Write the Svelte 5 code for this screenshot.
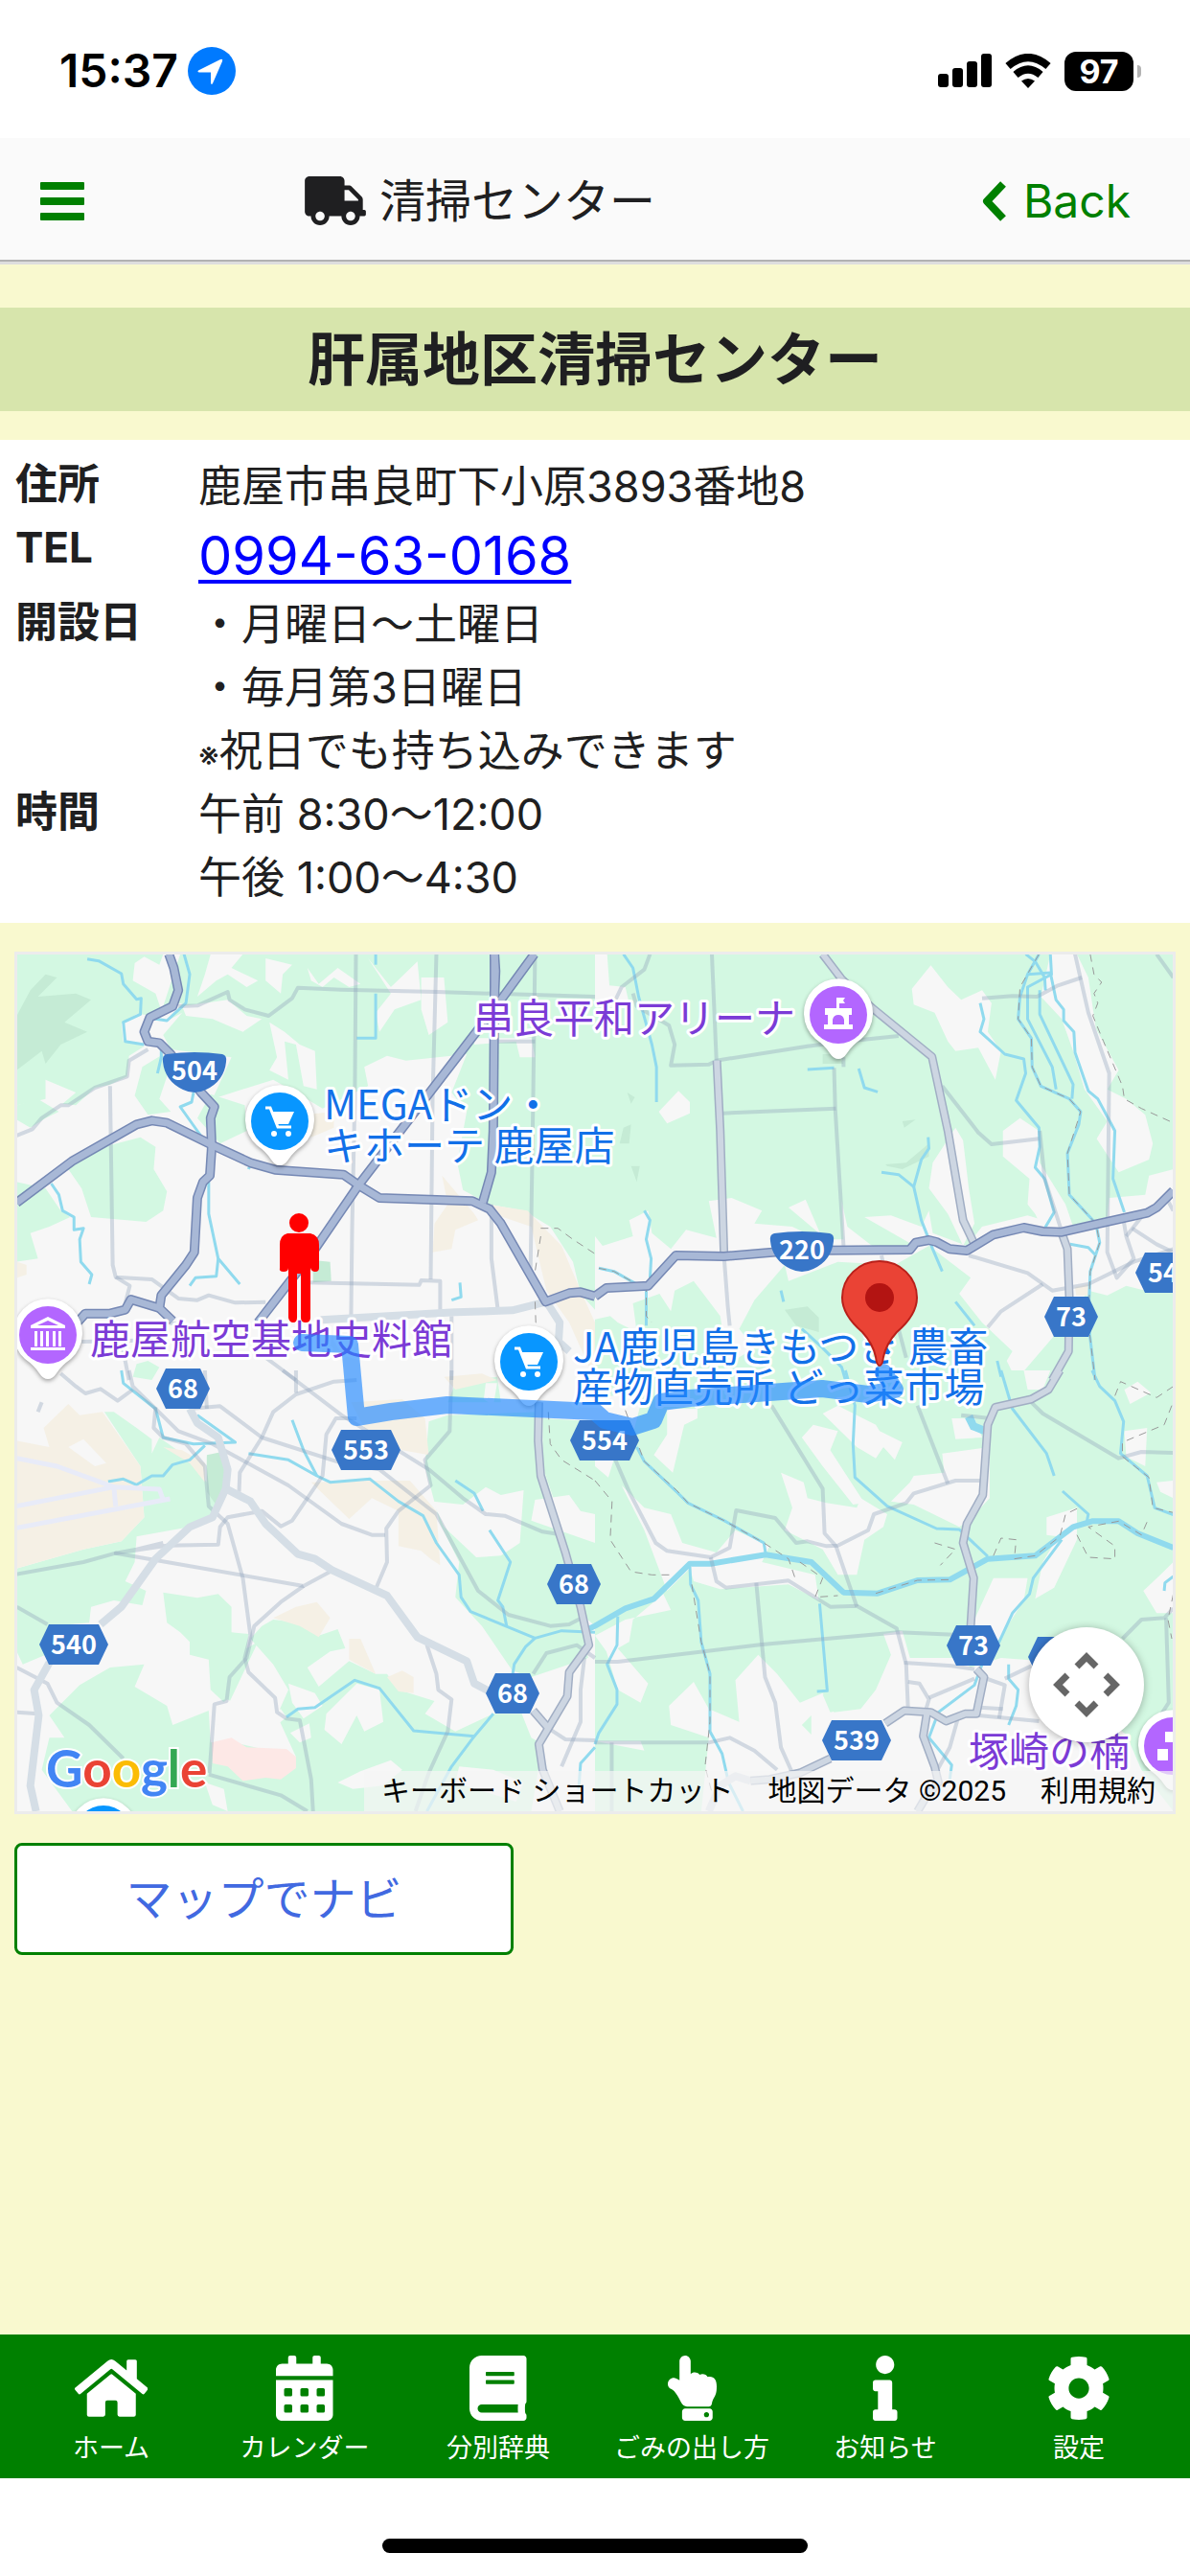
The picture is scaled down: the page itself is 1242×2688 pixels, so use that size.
<script>
  const tabs = [
    { label: 'ホーム', w: 576, d: 'M280.37 148.26L96 300.11V464a16 16 0 0 0 16 16l112.06-.29a16 16 0 0 0 15.92-16V368a16 16 0 0 1 16-16h64a16 16 0 0 1 16 16v95.64a16 16 0 0 0 16 16.05L464 480a16 16 0 0 0 16-16V300L295.67 148.26a12.19 12.19 0 0 0-15.3 0zM571.6 251.47L488 182.56V44.05a12 12 0 0 0-12-12h-56a12 12 0 0 0-12 12v72.61L318.47 43a48 48 0 0 0-61 0L4.34 251.47a12 12 0 0 0-1.6 16.9l25.5 31A12 12 0 0 0 45.15 301l235.22-193.74a12.19 12.19 0 0 1 15.3 0L530.9 301a12 12 0 0 0 16.9-1.6l25.5-31a12 12 0 0 0-1.7-16.93z' },
    { label: 'カレンダー', w: 448, d: 'M0 464c0 26.500 21.500 48 48 48h352c26.500 0 48-21.500 48-48V192H0zM400 64h-48V16c0-8.800-7.200-16-16-16h-32c-8.800 0-16 7.200-16 16v48H160V16c0-8.800-7.200-16-16-16h-32c-8.800 0-16 7.200-16 16v48H48C21.500 64 0 85.500 0 112v48h448v-48c0-26.500-21.500-48-48-48zM76 256h40q12 0 12 12v40q0 12-12 12H76q-12 0-12-12v-40q0-12 12-12zm128 0h40q12 0 12 12v40q0 12-12 12h-40q-12 0-12-12v-40q0-12 12-12zm128 0h40q12 0 12 12v40q0 12-12 12h-40q-12 0-12-12v-40q0-12 12-12zM76 384h40q12 0 12 12v40q0 12-12 12H76q-12 0-12-12v-40q0-12 12-12zm128 0h40q12 0 12 12v40q0 12-12 12h-40q-12 0-12-12v-40q0-12 12-12zm128 0h40q12 0 12 12v40q0 12-12 12h-40q-12 0-12-12v-40q0-12 12-12z' },
    { label: '分別辞典', w: 448, d: 'M448 360V24c0-13.3-10.7-24-24-24H96C43 0 0 43 0 96v320c0 53 43 96 96 96h328c13.3 0 24-10.7 24-24v-16c0-7.5-3.5-14.3-8.9-18.7-4.2-15.4-4.2-59.3 0-74.7 5.4-4.3 8.900-11.1 8.900-18.6zM128 134c0-3.3 2.7-6 6-6h212c3.3 0 6 2.7 6 6v20c0 3.3-2.7 6-6 6H134c-3.3 0-6-2.7-6-6v-20zm0 64c0-3.3 2.7-6 6-6h212c3.3 0 6 2.7 6 6v20c0 3.3-2.7 6-6 6H134c-3.3 0-6-2.7-6-6v-20zm253.4 250H96c-17.7 0-32-14.3-32-32 0-17.6 14.4-32 32-32h285.4c-1.9 17.1-1.9 46.9 0 64z' },
    { label: 'ごみの出し方', w: 384, d: 'M135.652 0c23.625 0 43.826 20.65 43.826 44.8v99.851c17.048-16.34 49.766-18.346 70.944 6.299 22.829-14.288 53.017-2.147 62.315 16.45C361.878 158.426 384 189.346 384 240c0 2.746-.203 13.276-.195 16 .168 61.971-31.065 76.894-38.315 123.731C343.683 391.404 333.599 400 321.786 400H150.261c-18.366-.011-35.889-10.607-43.845-28.464C93.421 342.648 57.377 276.122 29.092 264 10.897 256.203.008 242.616 0 224c-.014-34.222 35.098-57.752 66.908-44.119 8.359 3.583 16.67 8.312 24.918 14.153V44.8c0-23.45 20.543-44.8 43.826-44.8zM136 416h192c13.255 0 24 10.745 24 24v48c0 13.255-10.745 24-24 24H136c-13.255 0-24-10.745-24-24v-48c0-13.255 10.745-24 24-24zm168 28c-11.046 0-20 8.954-20 20s8.954 20 20 20 20-8.954 20-20-8.954-20-20-20z' },
    { label: 'お知らせ', w: 192, d: 'M20 424.229h20V279.771H20c-11.046 0-20-8.954-20-20V212c0-11.046 8.954-20 20-20h112c11.046 0 20 8.954 20 20v212.229h20c11.046 0 20 8.954 20 20V492c0 11.046-8.954 20-20 20H20c-11.046 0-20-8.954-20-20v-47.771c0-11.046 8.954-20 20-20zM96 0C56.235 0 24 32.235 24 72s32.235 72 72 72 72-32.235 72-72S135.764 0 96 0z' },
    { label: '設定', w: 512, d: 'M487.4 315.7l-42.6-24.6c4.3-23.2 4.3-47 0-70.2l42.6-24.6c4.9-2.8 7.1-8.6 5.500-14-11.1-35.6-30-67.8-54.7-94.6-3.8-4.1-10-5.1-14.8-2.3L380.8 110c-17.9-15.4-38.5-27.3-60.8-35.1V25.8c0-5.600-3.900-10.500-9.400-11.700-36.700-8.200-74.300-7.800-109.200 0-5.500 1.200-9.400 6.100-9.400 11.700V75c-22.200 7.900-42.800 19.800-60.800 35.100L88.700 85.500c-4.900-2.800-11-1.900-14.800 2.300-24.700 26.700-43.600 58.900-54.700 94.600-1.700 5.400.6 11.200 5.500 14L67.300 221c-4.300 23.200-4.300 47 0 70.200l-42.600 24.600c-4.900 2.800-7.100 8.600-5.500 14 11.100 35.600 30 67.800 54.700 94.600 3.800 4.100 10 5.100 14.800 2.300l42.600-24.600c17.900 15.400 38.500 27.300 60.800 35.100v49.200c0 5.600 3.900 10.500 9.400 11.700 36.700 8.200 74.300 7.800 109.200 0 5.500-1.200 9.400-6.100 9.400-11.700v-49.200c22.200-7.900 42.800-19.800 60.800-35.100l42.600 24.600c4.900 2.800 11 1.900 14.800-2.300 24.700-26.700 43.600-58.900 54.700-94.600 1.500-5.500-.7-11.300-5.600-14.100zM256 336c-44.1 0-80-35.9-80-80s35.9-80 80-80 80 35.900 80 80-35.900 80-80 80z' }
  ];

  // Four survey sheets, each with its own local grid, placed by translate + scale.
  const sheets = [
    {
      at: 'translate(0 980) scale(.39605 .33333)',
      land: [
        ['green', '44,47 430,47 420,80 380,55 355,75 350,130 410,170 430,240 360,235 320,265 325,320 380,335 340,365 335,430 290,455 250,465 200,520 165,515 200,480 120,440 120,500 44,520'],
        ['green', '44,520 100,500 155,540 120,560 80,590 44,565'],
        ['green', '375,400 430,360 440,430 420,500 450,540 390,550 355,490'],
        ['green', '475,47 1568,47 1568,1160 1530,1110 1510,1010 1450,900 1380,850 1290,830 1220,785 1205,700 1230,540 1190,480 1230,360 1070,380 1020,365 960,400 970,460 850,530 780,480 720,440 560,500 610,370 450,345 430,300 480,230 450,250 480,200 430,210'],
        ['green', '555,485 645,520 650,600 580,640 520,560'],
        ['green', '210,670 370,620 410,650 405,720 440,790 430,850 385,885 240,870 215,780 180,720'],
        ['green', '44,760 120,780 160,850 185,870 130,900 80,920 90,960 100,1000 44,1010'],
        ['green', '360,1330 390,1320 420,1340 400,1380 350,1370'],
        ['moss', '44,240 80,160 120,110 150,120 100,180 200,170 240,190 170,260 230,290 160,330 120,390 110,350 44,410'],
        ['moss', '825,1005 870,1010 873,1070 825,1075'],
        ['land', '555,47 640,47 610,90 680,130 650,150 600,110 570,130 520,180 540,110'],
        ['land', '700,60 770,80 745,110 740,170 700,130'],
        ['land', '810,90 840,140 890,90 950,140 920,150 880,120 850,150 820,130'],
        ['land', '970,60 1030,150 1100,70 1110,190 1040,220 1000,290 990,230 1030,170'],
        ['land', '480,210 600,190 650,240 690,250 640,290 560,250 490,240'],
        ['land', '710,260 750,290 790,330 830,350 835,470 800,460 780,330 750,320 760,440 710,410 730,370'],
        ['land', '1110,120 1170,120 1180,260 1130,300 1110,220'],
        ['land', '1250,310 1400,310 1410,370 1370,370 1360,320 1250,330'],
        ['sand', '800,550 880,540 880,590 820,620'],
        ['sand', '1165,740 1250,860 1260,880 1200,910 1190,970 1140,980 1145,890 1180,830'],
        ['sand', '1280,830 1390,850 1480,960 1530,1100 1568,1200 1568,1380 1500,1200 1440,1100 1400,900 1300,860'],
        ['sand', '44,1010 70,1020 70,1050 44,1060']
      ],
      water: ['230,62 260,68 320,108 325,140 360,188 372,185 370,235 325,260 330,320 380,330', '485,47 500,110 490,200 440,255 385,245', '425,330 425,370 415,420', '510,480 505,510 475,525 520,600 545,640', '990,170 990,310 940,310', '135,765 155,800 165,850 195,870 195,910 220,905 210,940 213,1010 242,1050 235,1080', '550,760 550,860 575,1000 632,1080', '575,1000 570,1055 515,1060 500,1085', '1190,1130 1215,1120 1212,1075', '990,47 990,80', '655,720 665,690'],
      minor: ['44,615 85,595 110,560 160,520 180,520 250,465 335,430 340,380 390,345', '290,460 297,1020 305,1058 400,1065 470,1125 520,1130 550,1115 620,1138 700,1136', '305,1058 342,1085 330,1140', '470,210 520,208 600,165 605,190 645,220 708,240 770,185 785,152 900,158 1150,165 1568,180', '938,47 935,500 928,900 925,1200', '1150,47 1140,500 1135,1065', '1410,47 1405,500 1398,1040', '810,1075 1105,1082 1110,1068 1160,1070 1160,1165', '1295,830 1295,1000 1312,1160', '1310,320 1410,320', '700,1310 780,1380', '215,1260 420,1255', '1190,1180 1190,1380', '320,1260 340,1380', '430,1160 440,1200 490,1210'],
      wide: ['845,1192 1200,1168 1350,1162 1440,1135 1475,1200 1472,1260 1500,1290'],
      trunk: ['445,47 458,90 470,160 455,210 395,245 380,290 390,320 420,325 450,360 530,480 565,525 555,560 558,650 553,740 535,760 520,810 512,980 490,1020 425,1115 420,1155 455,1195', '44,825 190,695 360,580 400,568 440,575 560,645 660,700 725,722 905,737 945,770 1000,810 1245,820 1290,845 1320,890 1438,1135 1500,1108 1530,1105 1568,1118', '1408,47 1320,190 945,770 830,970 680,1200', '1303,47 1306,100 1303,180 1300,600 1295,730 1272,825', '200,1205 225,1172 290,1172 330,1160 345,1128 420,1155', '1303,47 1303,180'],
      second: [],
      dash: ['1425,905 1470,905 1510,940 1568,985', '1425,930 1410,1040', '1410,1135 1412,1200 1440,1260']
    },
    {
      at: 'translate(621 980) scale(.39605 .33333)',
      land: [
        ['green', '0,47 1524,47 1524,1380 0,1380'],
        ['land', '0,47 32,47 38,145 80,150 90,200 60,220 0,200'],
        ['land', '835,155 885,82 930,150 965,190 1020,160 1045,200 1035,290 1070,350 1055,440 1010,340 950,350 930,320 895,230 840,205'],
        ['land', '168,540 220,475 250,510 250,545 190,577'],
        ['land', '1075,600 1120,560 1170,600 1172,700 1240,830 1260,900 1180,910 1160,860 1140,830 1145,750 1075,680'],
        ['land', '950,590 970,630 985,780 1000,890 970,960 930,860 880,780 890,700'],
        ['land', '1200,47 1270,47 1300,120 1320,280 1380,410 1350,470 1400,500 1450,550 1470,640 1460,690 1380,730 1322,625 1350,570 1290,470 1260,350 1230,250 1175,180'],
        ['land', '1524,720 1524,1080 1450,1100 1400,1085 1350,1115 1300,1100 1240,1200 1110,1380 1085,1320 1100,1290 1020,1200 960,1110 990,1060 880,960 790,1020 640,1010 510,1070 500,1020 420,1130 380,1220 420,1280 350,1330 330,1180 260,1070 210,1100 200,1165 170,1110 100,1140 110,1230 60,1200 40,1180 0,1190 0,930 20,960 100,930 90,880 140,850 150,920 200,970 240,910 320,935 300,820 360,810 440,850 420,890 520,900 640,970 510,840 555,815 600,940 655,940 650,820 665,900 730,960 850,965 710,870 780,865 860,900 880,850 890,920 980,960 1020,900 1140,865 1240,900 1350,870 1355,810 1450,800 1460,740'],
        ['sand', '1265,1090 1300,1080 1300,1115 1268,1115'],
        ['moss', '765,705 820,700 880,640 880,680 810,720 770,710'],
        ['moss', '500,1160 560,1150 590,1185 590,1230 530,1210'],
        ['moss', '85,480 105,495 95,515'], ['moss', '75,590 95,580 90,640 65,640'], ['moss', '600,360 640,360 655,390 600,390'],
        ['moss', '95,710 118,710 110,760'], ['moss', '810,570 845,565 815,590']
      ],
      water: ['75,47 100,90 115,180 150,330 162,400 162,510', '130,850 145,880 135,940 148,1000 145,1060', '560,408 630,403', '695,405 710,465 745,478', '755,730 800,737 840,775 860,690 880,655 878,620', '840,775 860,880 890,970 915,1040', '1015,200 1025,250 1015,290 1080,360 1130,375 1135,420 1110,505 1170,590 1172,650 1160,715 1185,750 1210,855 1185,905', '1170,47 1140,110 1120,180 1115,250 1150,310 1152,400 1175,460 1250,500 1280,540 1275,580 1245,670 1250,800 1320,890 1330,950 1305,1040 1300,1200 1318,1380', '1200,47 1203,110 1140,150 1140,250 1205,400 1215,470', '1140,110 1200,105 1215,190 1235,220 1235,255 1262,290 1265,355 1300,475 1325,500 1370,600 1365,750 1395,855', '1172,160 1172,235 1260,455 1257,500', '490,1100 497,1135', '950,1135 1000,1210', '545,1220 600,1280 650,1340 660,1380', '1252,955 1300,965 1320,990', '1135,47 1160,70 1185,120 1187,160', '10,1030 50,1040 110,1080', '135,1100 135,1210', '1060,1320 1070,1370'],
      minor: ['145,47 130,95 70,150 50,200', '100,170 110,210 195,270 210,330 200,395 300,392 320,380 560,335 660,320 800,303', '308,47 320,380', '335,545 635,530', '630,403 633,530 655,960', '655,400 655,370', '340,993 350,1150 355,1210', '915,460 1010,605 1045,642 1170,625', '1172,600 1185,750 1230,915', '1020,185 1100,178 1165,180 1220,145 1283,120', '1265,47 1300,230 1355,420 1350,980 1375,1060 1420,1000 1400,930 1390,860', '985,990 1140,1045 1205,1100 1300,1080 1420,1010 1524,970', '1180,1080 1070,1165 1035,1215', '1415,905 1480,955 1524,980', '1524,120 1480,47', '1510,820 1524,850', '800,1220 820,1310', '755,990 760,1020', '1440,870 1400,930'],
      wide: [],
      trunk: ['0,1118 30,1092 140,1085 213,990 340,993 520,975 830,972 845,950 880,942 900,948 935,970 980,975 1050,925 1130,903 1180,915 1230,917 1330,890 1455,857 1480,840 1524,788'],
      second: ['600,47 650,125 730,215 888,368 930,600 970,880 1000,955', '321,380 330,600 340,985', '1230,920 1245,970 1250,1120 1248,1290 1205,1380'],
      dash: ['1305,47 1315,110 1335,135 1315,170 1325,200 1312,240 1340,320 1390,460 1395,500 1440,530 1524,575', '1170,47 1120,150 1115,250 1150,310 1152,400 1175,460 1250,500 1280,540 1245,670 1250,800 1320,890 1330,950 1305,1040 1300,1200 1318,1380', '135,1080 135,1180 150,1200', '10,1030 50,1040 110,1080']
    },
    {
      at: 'translate(0 1430) scale(.39605 .33333)',
      land: [
        ['green', '44,620 220,560 320,535 380,460 370,300 275,130 300,130 360,180 400,215 400,260 420,210 480,260 520,310 545,350 545,270 580,260 600,370 570,460 500,490 360,520 355,600 330,660 385,690 375,735 300,720 240,740 235,790 130,800 120,890 60,920 44,880'],
        ['moss', '545,265 585,255 598,370 575,430 545,380'],
        ['green', '430,695 520,712 575,700 610,740 610,820 655,825 650,870 680,850 600,1050 555,1000 550,905 500,890 500,850 475,820 440,790'],
        ['green', '130,1080 210,985 290,930 380,920 355,990 440,1050 455,1110 550,1065 555,1165 600,1160 780,1210 730,1080 760,1000 720,920 660,840 690,800 720,780 790,790 840,830 890,810 910,870 870,880 810,930 840,990 920,910 990,950 1020,950 1050,1000 1145,1035 1120,1075 1200,1130 1300,1075 1375,1075 1400,1150 1430,1170 1400,1380 190,1380 110,1250 130,1150 170,1150'],
        ['green', '1130,160 1180,140 1420,130 1430,300 1500,560 1520,740 1550,900 1400,960 1350,940 1270,800 1200,710 1210,600 1160,480 1120,300'],
        ['green', '1200,40 1310,20 1320,100 1180,100'],
        ['green', '1430,150 1568,160 1568,800 1530,760 1520,700 1470,440 1430,300'],
        ['land', '1140,410 1220,420 1280,365 1320,390 1380,375 1370,540 1320,580 1255,585 1170,490'],
        ['land', '1410,405 1500,390 1530,440 1568,450 1568,540 1400,470'],
        ['land', '1280,40 1310,40 1300,110 1275,90'],
        ['land', '760,980 830,1010 850,1050 800,1090 770,1040'], ['land', '690,1085 740,1060 755,1085 715,1125'], ['land', '765,1135 815,1105 820,1150 790,1165'],
        ['land', '860,1075 940,980 1000,1000 1010,1100 960,1130 940,1080 900,1170 855,1125'],
        ['land', '560,1060 600,1030 655,1070 620,1100 560,1110'], ['land', '540,1290 590,1310 600,1380 560,1360'], ['land', '890,1290 950,1255 1030,1220 1060,1250 1010,1300 930,1310'],
        ['land', '1210,1240 1300,1250 1380,1290 1360,1350 1200,1290'],
        ['sand', '44,220 130,240 115,180 180,105 210,140 270,130 370,300 380,460 320,535 220,560 44,620'],
        ['sand', '925,100 1060,90 1120,150 1130,265 1060,250 960,180'], ['sand', '430,240 480,250 540,290 540,350 500,290'],
        ['sand', '820,350 980,345 1080,345 1150,440 1160,610 1135,590 1110,565 1050,550 1050,440 980,400 920,465'],
        ['sand', '720,775 780,740 835,725 870,775 840,835 790,800'], ['sand', '920,840 950,840 990,950 920,905'], ['sand', '1020,960 1060,940 1090,960 1090,1010 1050,1005'],
        ['sand', '1170,20 1270,10 1310,30 1200,60'],
        ['land', '180,240 220,215 280,290 250,300'],
        ['pink', '558,1165 610,1150 650,1180 755,1185 780,1210 780,1245 740,1280 700,1275 640,1285 600,1240 560,1230']
      ],
      water: ['320,0 325,40 410,120 430,210 510,230 620,225 520,140', '285,348 325,340 360,358 400,330 430,330 455,295 500,280 540,235', '770,155 800,250 835,330', '655,260 760,280 835,330 870,350 975,340 1050,410 1115,455 1150,540 1210,640 1215,710 1240,755 1410,838 1480,815 1568,820', '1200,345 1250,385 1273,440', '1290,500 1345,600 1312,720 1325,740 1335,800', '755,1085 785,1060 830,1055 935,970 1000,995 1090,1128 1250,1145 1300,1075', '1410,838 1385,865 1355,920 1350,960', '1250,1145 1190,1240 1125,1380', '1568,1180 1530,1230 1525,1310'],
      minor: ['160,10 200,50 225,72 265,58 310,95 350,60', '340,0 350,50 470,190 560,230 760,360 900,480 980,515 1015,515', '745,0 900,140 1130,310 1220,400 1280,450 1330,455 1430,505 1470,512', '940,30 880,35 780,75 720,130 690,210 632,320 630,380', '500,120 580,112 690,210 900,290 1000,310 1150,450 1260,690 1340,765 1450,800 1500,795 1540,770', '540,0 545,120', '940,150 885,150 860,200 850,330 770,470 740,488 690,440 600,460 580,490 575,545 440,548 305,572 360,560 430,540', '44,638 220,600 305,572 800,675 870,630', '800,675 740,725 670,800 650,900 605,960 597,1035 565,1045 552,1260', '410,115 405,180 430,210 490,230 540,300 550,425 600,480 640,650 660,830 645,900 655,945 725,1025 730,1070 755,1090 790,1095 820,1280 825,1380', '1190,0 1185,190 1120,280 1135,360 1050,440 1018,495 1020,600 990,685', '44,740 125,795', '44,930 125,980 150,1040 235,1110 325,1215', '44,1070 100,1075', '550,1265 740,1330 810,1380', '1125,860 1150,950 1155,1000 1190,1030 1180,1130 1130,1260 1095,1380', '1405,950 1440,885 1520,860 1568,900', '1540,900 1530,1000 1530,1100 1480,1240', '1445,1120 1490,1155 1568,1158', '780,0 780,70', '100,130 110,100'],
      wide: ['500,120 520,165 575,210 600,310 595,370 560,460 500,490 410,590 320,740 265,795', '130,915 90,1000 102,1080 80,1300 95,1380', '595,370 660,410 700,480 785,575 830,590 875,625 1020,705 1100,835 1230,910 1250,980 1290,1005'],
      runway: ['44,425 300,365 420,372 430,405', '44,493 448,402', '44,275 150,300 300,365 305,425'],
      trunk: [],
      second: ['1420,100 1418,220 1425,330 1490,570 1530,740 1552,860 1500,945 1495,1020 1445,1120 1420,1170 1430,1250 1475,1380', '1405,1065 1445,1120'],
      dash: ['1445,130 1450,230 1480,280 1568,345']
    },
    {
      at: 'translate(621 1430) scale(.39605 .33333)',
      land: [
        ['green', '0,0 1524,0 1524,1380 0,1380'],
        ['land', '0,90 130,60 100,200 60,240 35,335 0,300'],
        ['land', '190,120 270,120 270,150 235,170 205,320 155,265 190,200'],
        ['land', '545,210 575,170 640,190 620,250 710,415 680,420 600,300'], ['land', '600,135 640,110 740,170 750,190 810,225 790,280 760,240 740,275 690,240'],
        ['land', '490,320 550,350 560,400 610,415 690,430 700,400 770,450 760,490 710,530 690,640 640,640 600,560 500,500 520,430'],
        ['land', '830,350 840,330 920,320 915,260 1040,240 1040,400 985,470 960,490 840,420 780,410'],
        ['land', '940,150 1000,150 1020,210 950,215'],
        ['land', '70,360 130,430 200,450 230,540 320,570 370,500 460,550 440,600 580,640 590,720 510,670 330,685 260,660 250,620 190,690 130,500'],
        ['land', '1050,650 1140,650 1130,720 1060,850 980,800 1000,780'],
        ['land', '1190,460 1270,430 1270,530 1210,680 1160,715 1180,600 1220,520 1190,515'],
        ['land', '1130,0 1200,0 1180,60 1140,60'],
        ['land', '760,825 810,815 830,900 960,900 990,930 1070,900 1180,910 1180,1050 1524,1080 1524,1380 1140,1380 280,1380 300,1150 200,1110 195,1050 260,975 300,1060 380,1100 370,970 430,890 480,950 540,1040 600,1010 630,1070 700,1060 740,1000 780,890'],
        ['green', '1290,1040 1524,990 1524,1380 1440,1250 1400,1140'],
        ['green', '545,1110 570,1080 570,1140'], ['green', '600,1015 665,1020 660,1060 620,1070'],
        ['land', '0,830 80,780 200,750 180,700 100,780 90,850 60,870 140,980 120,1040 60,1000 30,880'],
        ['land', '1395,190 1455,180 1450,300 1400,270'], ['land', '1395,60 1430,35 1465,70 1410,105'],
        ['land', '1445,690 1490,640 1524,600 1524,760 1480,760'], ['land', '1480,350 1524,345 1524,400 1490,380'],
        ['land', '0,1160 120,1160 130,1190 0,1160'],
        ['lake', '975,150 995,138 1005,165 1025,175 1022,200 990,185']
      ],
      water: ['110,240 130,285 215,380 245,415 340,470 445,540 450,575', '660,0 685,110 680,230 685,335 770,425 900,495 960,498 1035,582', '1070,0 1100,120 1190,260 1210,330', '1232,378 1300,450 1295,480', '1230,530 1155,650 1145,700 1100,760 1065,850 1020,920 1000,985 905,1070 880,1150 940,1235 935,1280', '250,615 252,670 272,720 280,850 303,950 303,1130 335,1200 352,1290 390,1380', '592,730 612,1003 585,1005', '60,770 58,860 32,920 58,1000 58,1045 10,1135 0,1170', '1310,0 1330,50 1370,95 1393,160 1385,260 1455,330 1475,430 1524,452', '1090,920 1090,965 1115,1000 1110,1050 1090,1110', '1524,645 1502,665 1500,690'],
      river: ['-28,816 0,800 80,745 155,715 250,605 305,605 450,577 570,600 655,695 745,698 850,657 935,655 1035,590 1160,580 1260,490 1310,472 1380,472 1430,510 1524,555'],
      minor: ['50,270 90,380 160,540 190,565 305,585 355,555 372,438 475,462 530,540 560,535 610,550 640,548 720,500 735,450 820,415 840,385 950,345 1020,345', '465,110 600,370 605,510 635,550 690,740', '305,585 320,660 345,680 510,658 620,740 690,737 795,808 820,920 825,1060', '0,912 60,912 440,858 800,820 960,828', '425,665 448,960 475,1040 490,1180 520,1260', '850,110 930,355', '1150,100 1180,135 1380,275 1440,255 1524,258', '815,915 940,925 1000,935', '825,975 855,980 880,1030 870,1070', '880,1025 1000,965', '1020,960 1080,985 1065,1090', '1010,1080 1170,1098', '1080,965 1150,925', '1015,1055 1075,1060', '955,1095 935,1180 905,1245', '0,1165 300,1165 355,1150 420,1190 480,1250', '44,1165 44,1380', '1390,840 1440,780 1500,775 1524,745', '1505,775 1512,1040 1490,1080', '965,140 1040,150'],
      wide: ['410,1285 370,1270 330,1300 300,1380'],
      trunk: [],
      second: ['1225,0 1195,60 1150,90 1055,115 1035,170 1022,390 980,480 970,540 998,650 990,800', '1005,935 1025,960 1005,1075 975,1075 925,1098 885,1070 815,1065 765,1105', '875,1070 865,1145 895,1240 905,1290 870,1340 850,1380', '620,1215 540,1260 460,1280 410,1285'],
      dash: ['80,125 130,285 215,375 245,415 340,470 445,540 510,590 530,660', '0,345 45,410 40,530 95,630 150,640 200,640', '540,600 600,650 580,710 640,705', '740,698 850,657 935,655', '895,540 950,560 910,610', '1050,580 1070,525 1110,530 1105,590 1160,580 1225,520 1240,450 1275,430', '1270,515 1300,585 1370,590 1370,550 1300,490 1380,472 1440,515 1460,460', '1524,50 1480,85 1385,35 1370,80', '1520,110 1500,170 1390,225 1390,270 1460,335 1470,430 1524,445', '255,670 280,850 303,950 303,1100 290,1240 310,1330', '1524,700 1510,780 1520,840']
    }
  ];

  const layers = ['water', 'river', 'minor', 'wide', 'runway', 'dash'];

  const hexes = [
    [1118, 1374, '73'], [191, 1449, '68'], [382, 1513, '553'], [631, 1503, '554'], [599, 1653, '68'],
    [77, 1716, '540'], [535, 1767, '68'], [894, 1816, '539'], [1016, 1717, '73'], [1101, 1729, '']
  ];
  const shields = [[203, 1098, '504'], [837, 1285, '220']];
  const places = [
    { x: 494, y: 1078, kind: 'purple', text: '串良平和アリーナ' },
    { x: 338, y: 1168, kind: 'blue', text: 'MEGAドン・' },
    { x: 338, y: 1211, kind: 'blue', text: 'キホーテ 鹿屋店' },
    { x: 94, y: 1413, kind: 'purple', text: '鹿屋航空基地史料館' },
    { x: 598, y: 1421, kind: 'blue', text: 'JA鹿児島きもつき 農畜' },
    { x: 598, y: 1463, kind: 'blue', text: '産物直売所 どっ菜市場' },
    { x: 1011, y: 1843, kind: 'purple', text: '塚崎の楠' }
  ];
  const pins = [
    { x: 292, y: 1170, kind: 'cart' }, { x: 552, y: 1421, kind: 'cart' }, { x: 108, y: 1914, kind: 'cart' },
    { x: 50, y: 1393, kind: 'museum' }, { x: 875, y: 1059, kind: 'castle' }, { x: 1224, y: 1822, kind: 'site' }
  ];
  const hexHalf = (t) => (t.length === 3 ? 36 : 28);
  const hexPoints = (t) => {
    const h = hexHalf(t);
    return `${-h},0 ${10 - h},-21 ${h - 10},-21 ${h},0 ${h - 10},21 ${10 - h},21`;
  };
</script>

<div class="screen">
  <div class="status">
    <div class="clock">
      <span>15:37</span>
      <svg width="50" height="50" viewBox="0 0 50 50" aria-hidden="true">
        <circle cx="25" cy="25" r="25" fill="#007aff" />
        <path d="M11 24.500 34 13q3-1 2 2L26 38q-1.500 2-2-.5V26.500H12q-2.500-.5-1-2z" fill="#fff" />
      </svg>
    </div>
    <div class="radio">
      <svg width="56" height="36" viewBox="0 0 56 36" aria-hidden="true">
        <rect x="0" y="21" width="11" height="14" rx="3" /><rect x="15" y="15" width="11" height="20" rx="3" />
        <rect x="30" y="8" width="11" height="27" rx="3" /><rect x="45" y="0" width="11" height="35" rx="3" />
      </svg>
      <svg width="48" height="36" viewBox="0 0 48 36" aria-hidden="true">
        <g fill="none" stroke="#000" stroke-width="8"><path d="M3 13Q24-5 45 13" /><path d="M11 22Q24 11 37 22" /></g>
        <path d="M24 36 17 28.500Q24 23.500 31 28.500z" />
      </svg>
      <div class="battery"><span>97</span></div>
    </div>
  </div>

  <header>
    <button class="menu" aria-label="メニュー">
      <svg width="46" height="40" viewBox="0 0 46 40" fill="#008000"><rect width="46" height="8" rx="1" /><rect y="16" width="46" height="8" rx="1" /><rect y="32" width="46" height="8" rx="1" /></svg>
    </button>
    <div class="title">
      <svg width="64" height="51" viewBox="0 0 640 512" aria-hidden="true"><path fill="#1f1f21" d="M624 352h-16V243.900c0-12.700-5.100-24.900-14.100-33.900L494 110.100c-9-9-21.200-14.100-33.900-14.100H416V48c0-26.500-21.500-48-48-48H48C21.500 0 0 21.500 0 48v320c0 26.500 21.500 48 48 48h16c0 53 43 96 96 96s96-43 96-96h128c0 53 43 96 96 96s96-43 96-96h48c8.800 0 16-7.200 16-16v-32c0-8.800-7.200-16-16-16zM160 464c-26.500 0-48-21.500-48-48s21.500-48 48-48 48 21.500 48 48-21.500 48-48 48zm320 0c-26.500 0-48-21.500-48-48s21.500-48 48-48 48 21.500 48 48-21.500 48-48 48zm80-208H416V144h44.100l99.900 99.900V256z" /></svg>
      <span>清掃センター</span>
    </div>
    <button class="back">
      <svg width="28" height="44" viewBox="0 0 28 44" aria-hidden="true"><path d="M23 4 6 22l17 18" fill="none" stroke="#008000" stroke-width="8" stroke-linejoin="round" /></svg>
      <span>Back</span>
    </button>
  </header>

  <main>
    <h1>肝属地区清掃センター</h1>

    <div class="info">
      <table>
        <tbody>
          <tr><th scope="row">住所</th><td>鹿屋市串良町下小原3893番地8</td></tr>
          <tr><th scope="row">TEL</th><td class="tel"><a href="tel:0994-63-0168">0994-63-0168</a></td></tr>
          <tr><th scope="row">開設日</th><td>・月曜日〜土曜日<br />・毎月第3日曜日<br /><span class="note">※</span>祝日でも持ち込みできます</td></tr>
          <tr><th scope="row">時間</th><td>午前 8:30〜12:00<br />午後 1:00〜4:30</td></tr>
        </tbody>
      </table>
    </div>

    <div class="content">
      <div class="map">
        <svg class="canvas" viewBox="18 996 1206 894" role="img" aria-label="地図">
          <rect x="18" y="996" width="1206" height="894" fill="#f7f7f7" />
          {#each sheets as s}
            <g transform={s.at}>
              {#each s.land as [kind, points]}<polygon class={kind} {points} />{/each}
            </g>
          {/each}
          {#each layers as layer}
            {#each sheets as s}
              <g transform={s.at} class={layer}>
                {#each s[layer] ?? [] as points}<polyline {points} />{/each}
              </g>
            {/each}
          {/each}
          {#each ['second', 'trunk'] as layer}
            {#each ['casing', 'core'] as part}
              {#each sheets as s}
                <g transform={s.at} class="{layer} {part}">
                  {#each s[layer] as points}<polyline {points} />{/each}
                </g>
              {/each}
            {/each}
          {/each}

          {#each shields as [x, y, t]}
            <g transform="translate({x} {y})">
              <path fill="#3876c8" d="M-29 2Q0-2 29 2q5 1 4 8-2 20-21 29-12 6-24 0-19-9-21-29-1-7 4-8z" />
              <text class="num" y="29">{t}</text>
            </g>
          {/each}
          {#each hexes as [x, y, t]}
            <g transform="translate({x} {y})">
              <polygon fill="#3876c8" points={hexPoints(t)} />
              {#if t}<text class="num" y="10">{t}</text>{/if}
            </g>
          {/each}
          <polygon fill="#3876c8" points="1185,1328 1195,1307 1260,1307 1260,1349 1195,1349" />
          <text class="num start" x="1198" y="1338">54</text>

          {#each pins as p}
            <g transform="translate({p.x} {p.y})" class="pin">
              <path fill="#fff" d="M0 46q-5 0-9-6Q-14 32-24 25A36 36 0 1 1 24 25Q14 32 9 40q-4 6-9 6z" />
              <circle r="30" fill={p.kind === 'cart' ? '#0896ff' : '#b366ff'} />
              {#if p.kind === 'cart'}
                <path fill="none" stroke="#fff" stroke-width="3" d="M-15-14h5l8 20h14" />
                <path fill="#fff" d="M-9-10h24l-6 13H-4z" /><circle cx="-6" cy="13" r="3" fill="#fff" /><circle cx="9" cy="13" r="3" fill="#fff" />
              {:else if p.kind === 'museum'}
                <path fill="#fff" d="M-18-10 0-19 18-10v3h-36zM-14-4h3v16h-3zM-8-4h3v16h-3zM-2-4h3v16h-3zM5-4h3v16H5zM11-4h3v16h-3zM-18 13h36v3h-36z" />
                <path fill="#b366ff" d="M-11-10 0-15 11-10z" />
              {:else if p.kind === 'castle'}
                <path fill="#fff" d="M-2-18H7l-2 3 2 3H1v5h13v7h-3v10h4v5h-30v-5h4V0h-3v-7H-2zM-6 10H6V5Q5 0 0 0t-6 5z" />
              {:else}
                <path fill="#fff" d="M-8-15h9V-4h-9zM-16 3h11v12h-11z" />
              {/if}
            </g>
          {/each}
          {#each places as p}<text class="place {p.kind}" x={p.x} y={p.y}>{p.text}</text>{/each}

          <path class="route" d="M315 1401 365 1403 372 1479 408 1473 467 1466 621 1473 631 1482 660 1489 682 1482 690 1463 720 1459 858 1449 906 1455 934 1450 922 1432" />

          <g fill="#f00">
            <circle cx="312" cy="1276" r="10" />
            <path d="M300 1287h24q9 2 9 12v24q0 4-4 4t-5-4v52q0 5-5 5t-5-5v-46h-4v46q0 5-4 5t-5-5v-52q0 4-5 4t-4-4v-24q0-10 8-12z" />
          </g>
          <path fill="#ea4335" stroke="#b9201a" stroke-width="2" d="M918 1425q-3 0-4-9-3-14-14-26-21-18-21-36a39 38 0 0 1 78 0q0 18-21 36-11 12-14 26-1 9-4 9z" />
          <circle cx="918" cy="1354" r="15" fill="#b31412" />

          <text class="google" x="48" y="1865"><tspan fill="#4285f4">G</tspan><tspan fill="#ea4335">o</tspan><tspan fill="#fbbc05">o</tspan><tspan fill="#4285f4">g</tspan><tspan fill="#34a853">l</tspan><tspan fill="#ea4335">e</tspan></text>
        </svg>
        <button class="camera" aria-label="地図のカメラ コントロール">
          <svg width="72" height="72" viewBox="-36 -36 72 72" fill="none" stroke="#666" stroke-width="7"><path d="M-10-19 0-29 10-19M-10 19 0 29 10 19M-20-10-30 0-20 10M20-10 30 0 20 10" /></svg>
        </button>
        <div class="credits">
          <button>キーボード ショートカット</button>
          <span>地図データ ©2025</span>
          <a href="#terms">利用規約</a>
        </div>
      </div>

      <button class="navi">マップでナビ</button>
    </div>
  </main>

  <nav>
    {#each tabs as t}
      <a href="#tab">
        <svg height="68" width={t.w / 512 * 68} viewBox="0 0 {t.w} 512" aria-hidden="true"><path fill="#fff" fill-rule="evenodd" d={t.d} /></svg>
        <span>{t.label}</span>
      </a>
    {/each}
  </nav>
  <div class="home"><i></i></div>
</div>

<style>
  :global(body) { margin: 0; background: #fff; }
  .screen {
    display: flex; flex-direction: column; min-height: 100vh;
    font-family: Inter, "Noto Sans CJK JP", sans-serif; color: #1f1f21;
  }
  button { border: 0; background: none; padding: 0; margin: 0; font: inherit; color: inherit; }
  svg { display: block; }

  .status { display: flex; justify-content: space-between; align-items: center; height: 144px; padding: 4px 51px 0 62px; box-sizing: border-box; color: #000; }
  .clock { display: flex; align-items: center; gap: 10px; font-size: 48px; font-weight: 600; line-height: 50px; }
  .radio { display: flex; align-items: center; gap: 14px; }
  .battery { position: relative; width: 72px; height: 41px; border-radius: 12px; background: #000; color: #fff; font-size: 34px; font-weight: 700; line-height: 41px; text-align: center; margin-right: 8px; }
  .battery::after { content: ""; position: absolute; right: -8px; top: 14px; width: 4px; height: 13px; border-radius: 0 4px 4px 0; background: #b3b3b3; }

  header { display: grid; grid-template-columns: 180px 1fr 420px; align-items: center; height: 129px; padding-top: 4px; box-sizing: border-box; background: #fafafa; border-bottom: 2px solid #b2b2b2; box-shadow: 0 3px 0 #dedede; position: relative; }
  .menu { padding-left: 42px; justify-self: start; }
  .title { display: flex; justify-content: center; align-items: center; gap: 14px; font-size: 48px; line-height: 60px; }
  .back { display: flex; align-items: center; justify-self: end; gap: 16px; padding-right: 62px; font-size: 48px; line-height: 60px; color: #008000; }

  main { flex: 1; background: #f9f9cf; padding-top: 48px; }
  h1 { margin: 0 0 30px; background: #d7e5ac; text-align: center; font-size: 60px; line-height: 108px; font-weight: 700; }
  .info { background: #fff; padding: 16px 0 14px 16px; }
  table { border-collapse: collapse; font-size: 45px; line-height: 66px; }
  th, td { padding: 0; vertical-align: top; text-align: left; }
  th { width: 191px; line-height: 60px; font-size: 44px; font-weight: 700; }
  .tel { font-size: 56px; line-height: 78px; }
  .tel a { color: #00f; text-decoration-thickness: 4px; text-underline-offset: 5px; }
  .note { font-size: 34px; line-height: 0; }

  .content { padding: 30px 15px; }
  .map { position: relative; border: 3px solid #ececec; overflow: hidden; }
  .canvas { width: 100%; height: auto; }
  .green { fill: #d3f8e2; }
  .moss { fill: #c5ebd5; }
  .land { fill: #f7f7f7; }
  .sand { fill: #f5f0e5; }
  .pink { fill: #fde8e6; }
  .lake { fill: #90daee; }
  polyline { fill: none; vector-effect: non-scaling-stroke; stroke-linejoin: round; }
  .water { stroke: #90daee; stroke-width: 3; }
  .river { stroke: #90daee; stroke-width: 6; }
  .minor { stroke: rgba(140, 160, 185, .36); stroke-width: 4; }
  .wide { stroke: #d5dee6; stroke-width: 8; }
  .runway { stroke: #e8ebf8; stroke-width: 5; }
  .dash { stroke: #999; stroke-width: 1; stroke-dasharray: 8 6; }
  .second.casing { stroke: #a1aec4; stroke-width: 9; }
  .second.core { stroke: #cdd6e2; stroke-width: 6; }
  .trunk.casing { stroke: #7588b4; stroke-width: 10; }
  .trunk.core { stroke: #a8b8d6; stroke-width: 7; }
  .num { font: 700 27px "Noto Sans CJK JP", sans-serif; fill: #fff; text-anchor: middle; }
  .num.start { text-anchor: start; }
  .pin { filter: drop-shadow(0 2px 2px rgba(0, 0, 0, .35)); }
  .place { font: 400 42px "Noto Sans CJK JP", sans-serif; stroke: #fff; stroke-width: 6px; paint-order: stroke; stroke-linejoin: round; }
  .purple { fill: #7b3bd6; }
  .blue { fill: #1270e8; }
  .route { fill: none; stroke: #2288ff; stroke-opacity: .65; stroke-width: 18; stroke-linecap: round; stroke-linejoin: round; }
  .google { font: 700 53px Lato, sans-serif; stroke: #fff; stroke-width: 4px; paint-order: stroke; }
  .camera { position: absolute; right: 30px; bottom: 72px; width: 120px; height: 120px; border-radius: 50%; background: #fff; box-shadow: 0 1px 8px rgba(0, 0, 0, .3); display: grid; place-items: center; }
  .credits { position: absolute; right: 0; bottom: 0; display: flex; gap: 36px; height: 42px; padding: 0 18px; background: rgba(245, 245, 245, .7); color: #000; font: 30px/42px Roboto, "Noto Sans CJK JP", sans-serif; white-space: nowrap; }
  .credits a { color: #000; text-decoration: none; }
  .navi { display: block; width: 43%; margin-top: 30px; border: 3px solid #008000; border-radius: 8px; background: #fff; color: #4169e1; font-size: 48px; line-height: 111px; }

  nav { display: grid; grid-template-columns: repeat(6, 1fr); height: 150px; padding: 0 15px; background: #008000; }
  nav a { display: flex; flex-direction: column; align-items: center; gap: 8px; padding-top: 22px; color: #fff; text-decoration: none; font-size: 27px; line-height: 42px; white-space: nowrap; }
  .home { height: 102px; background: #fff; display: flex; justify-content: center; align-items: flex-end; padding-bottom: 24px; box-sizing: border-box; }
  .home i { width: 444px; height: 15px; border-radius: 8px; background: #000; }
</style>
